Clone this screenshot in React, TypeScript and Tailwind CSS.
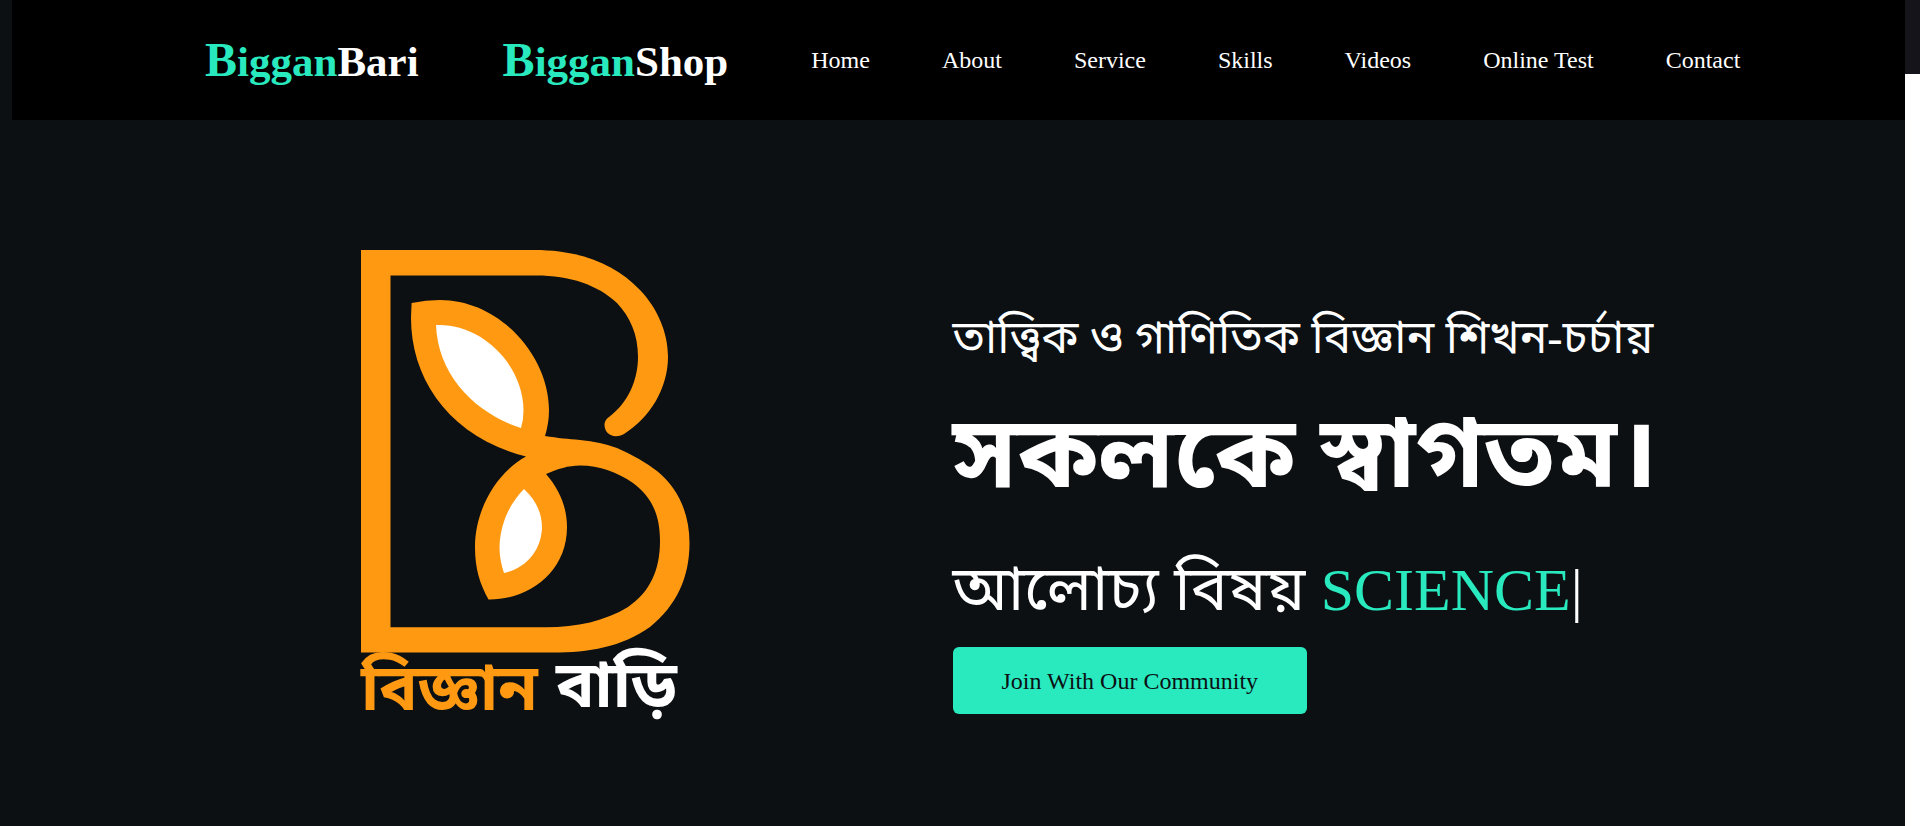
const links = ["Home", "About", "Service", "Skills", "Videos", "Online Test", "Contact"];

function Brand({ tail }: { tail: string }) {
  return (
    <a href="#" className="text-[43px] leading-[56px] font-bold whitespace-nowrap text-white">
      <span className="text-[#29e9bf]">
        <span className="text-[48px]">B</span>iggan
      </span>
      {tail}
    </a>
  );
}

function Logo() {
  return (
    <svg viewBox="361 250 330 470" className="h-[470px] w-[330px] overflow-visible" role="img" aria-label="বিজ্ঞান বাড়ি">
      <path
        fill="#ff9912"
        fillRule="evenodd"
        d="M361 250H534C582 250 616 265 640 290C658 309 668 333 668 357C668 388 650 418 624 434C613 440 604 433 604.500 424C605 421 606 419 609 417C628 403 638 380 638 357C638 334 630 317 617 303C598 285 570 275.500 536 275.500H390.500V627.300H546C577 627.300 605 621 628 607C650 592 660 570 660 541C660 512 650 496 633 483C617 472 600 465.500 580 465.500C568 465.500 558 469 546 474C560 490 567 508 567 527C567 572 529 600 488.500 599.500C480 584 475 569 475 547C475 510 496 473 526 456.500C450 437 411 380 411 318L411.600 303Q426 300 440 300C500 300 549 356 549 410Q549 423 545 436C558 438 568 439 580 440Q601 442 617 448Q640 458 657 471C678 488 689.500 513 689.500 543C689.500 577 677 605 650 627C622 647 588 652.600 553 652.600H361Z"
      />
      <path fill="#fff" d="M436 325C482 323 523 365 523.500 410Q523.500 420 521 428C477 414 438 377 436 325Z" />
      <path fill="#fff" d="M524 489C536 500 542 513 542 528C541 551 526 568 504 573Q499.500 560 499.500 547C500 525 509 504 524 489Z" />
      <g fontFamily="'Liberation Serif', 'Noto Sans Bengali', 'Noto Sans', serif" fontWeight="700" fontSize="64">
        <text x="361" y="710" fill="#ff9912">বিজ্ঞান</text>
        <text x="556" y="707" fill="#fff">বাড়ি</text>
      </g>
    </svg>
  );
}

export default function App() {
  return (
    <div className="flex min-h-screen bg-[#0c1013] font-['Liberation_Serif','Noto_Sans_Bengali','Noto_Sans',serif] text-white">
      <div className="flex min-w-0 flex-1 flex-col">
        <header className="ml-3 flex h-[120px] items-center gap-[83px] bg-black pr-12 pl-[193px]">
          <div className="flex gap-[84px] pt-0.5">
            <Brand tail="Bari" />
            <Brand tail="Shop" />
          </div>
          <nav className="flex items-center gap-[72px] text-2xl whitespace-nowrap">
            {links.map((l) => (
              <a key={l} href="#">
                {l}
              </a>
            ))}
          </nav>
        </header>
        <main className="grid flex-1 grid-cols-2">
          <div className="flex justify-center pt-[130px] pl-[100px]">
            <Logo />
          </div>
          <section className="flex flex-col items-start pt-[182px] whitespace-nowrap">
            <h3 className="text-[46px] leading-[72px]">তাত্ত্বিক ও গাণিতিক বিজ্ঞান শিখন-চর্চায়</h3>
            <h1 className="mt-5 text-[100px] leading-[120px] font-bold">সকলকে স্বাগতম।</h1>
            <h3 className="mt-[30px] text-[62px] leading-[90px]">
              আলোচ্য বিষয়{" "}
              <span className="text-[60px]">
                <span className="text-[#29e9bf]">SCIENCE</span>|
              </span>
            </h3>
            <button type="button" className="mt-3 h-[67px] rounded-md bg-[#29e9bf] px-[49px] text-2xl text-[#0c1013]">
              Join With Our Community
            </button>
          </section>
        </main>
      </div>
      <div className="flex w-[15px] flex-col bg-white">
        <div className="h-[74px] bg-[#14141a]" />
      </div>
    </div>
  );
}
